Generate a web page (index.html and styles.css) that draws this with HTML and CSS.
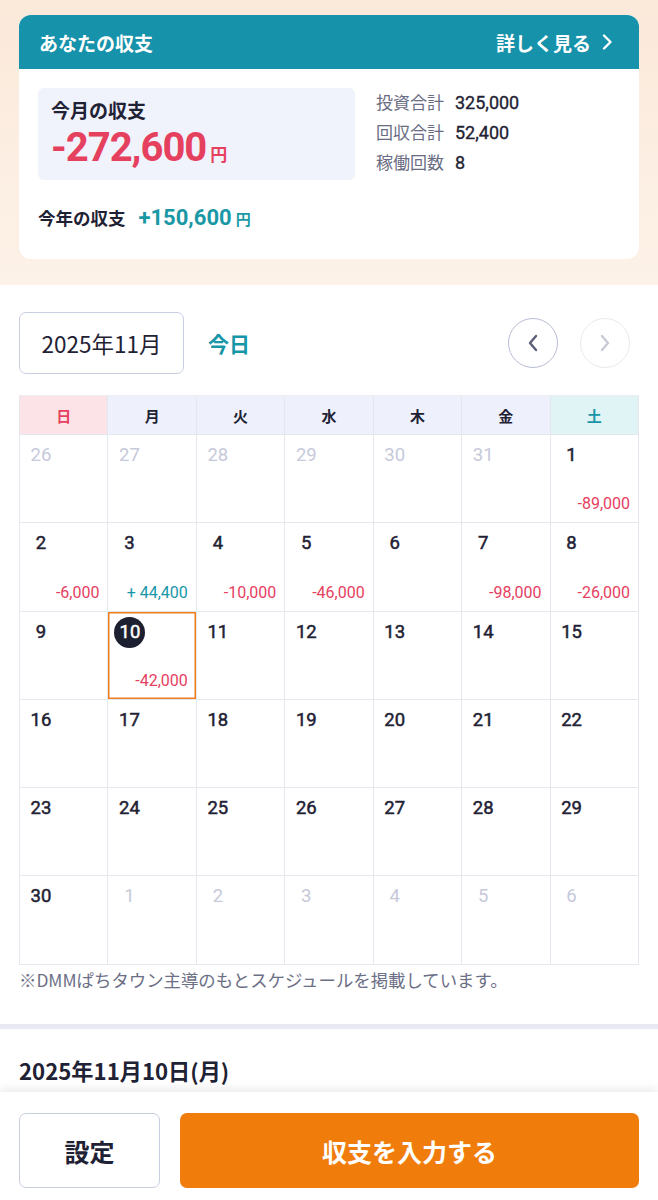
FILE: index.html
```html
<!DOCTYPE html>
<html lang="ja">
<head>
<meta charset="utf-8">
<link rel="stylesheet" href="styles.css">
</head>
<body>
<div class="page">
  <section class="top">
    <div class="card">
      <div class="card-head">
        <span class="card-title">あなたの収支</span>
        <span class="card-link">詳しく見る
          <svg class="link-chev" width="12" height="18" viewBox="0 0 12 18"><path d="M3 2.5 L9.5 9 L3 15.5" fill="none" stroke="#fff" stroke-width="2.4" stroke-linecap="round" stroke-linejoin="round"/></svg>
        </span>
      </div>
      <div class="card-body">
        <div class="summary-row">
          <div class="month-box">
            <div class="month-label">今月の収支</div>
            <div class="month-amount"><span class="big-num">-272,600</span><span class="yen">円</span></div>
          </div>
          <dl class="stats">
            <div class="stat"><dt>投資合計</dt><dd>325,000</dd></div>
            <div class="stat"><dt>回収合計</dt><dd>52,400</dd></div>
            <div class="stat"><dt>稼働回数</dt><dd>8</dd></div>
          </dl>
        </div>
        <div class="year-row">
          <span class="year-label">今年の収支</span>
          <span class="year-num">+150,600</span><span class="year-yen">円</span>
        </div>
      </div>
    </div>
  </section>

  <section class="calendar-section">
    <div class="cal-toolbar">
      <div class="month-select">2025年11月</div>
      <span class="today">今日</span>
      <div class="nav">
        <button class="nav-btn prev"><svg width="14" height="20" viewBox="0 0 14 20"><path d="M10 3 L4 10 L10 17" fill="none" stroke="#5b5e79" stroke-width="2.4" stroke-linecap="round" stroke-linejoin="round"/></svg></button>
        <button class="nav-btn next"><svg width="14" height="20" viewBox="0 0 14 20"><path d="M4 3 L10 10 L4 17" fill="none" stroke="#c9cbd6" stroke-width="2.4" stroke-linecap="round" stroke-linejoin="round"/></svg></button>
      </div>
    </div>

    <div class="cal">
      <div class="wd sun">日</div>
      <div class="wd">月</div>
      <div class="wd">火</div>
      <div class="wd">水</div>
      <div class="wd">木</div>
      <div class="wd">金</div>
      <div class="wd sat">土</div>

      <div class="day other"><span class="dn">26</span></div>
      <div class="day other"><span class="dn">27</span></div>
      <div class="day other"><span class="dn">28</span></div>
      <div class="day other"><span class="dn">29</span></div>
      <div class="day other"><span class="dn">30</span></div>
      <div class="day other"><span class="dn">31</span></div>
      <div class="day"><span class="dn">1</span><span class="amt minus">-89,000</span></div>

      <div class="day"><span class="dn">2</span><span class="amt minus">-6,000</span></div>
      <div class="day"><span class="dn">3</span><span class="amt plus">+ 44,400</span></div>
      <div class="day"><span class="dn">4</span><span class="amt minus">-10,000</span></div>
      <div class="day"><span class="dn">5</span><span class="amt minus">-46,000</span></div>
      <div class="day"><span class="dn">6</span></div>
      <div class="day"><span class="dn">7</span><span class="amt minus">-98,000</span></div>
      <div class="day"><span class="dn">8</span><span class="amt minus">-26,000</span></div>

      <div class="day"><span class="dn">9</span></div>
      <div class="day selected"><span class="dn">10</span><span class="amt minus">-42,000</span></div>
      <div class="day"><span class="dn">11</span></div>
      <div class="day"><span class="dn">12</span></div>
      <div class="day"><span class="dn">13</span></div>
      <div class="day"><span class="dn">14</span></div>
      <div class="day"><span class="dn">15</span></div>

      <div class="day"><span class="dn">16</span></div>
      <div class="day"><span class="dn">17</span></div>
      <div class="day"><span class="dn">18</span></div>
      <div class="day"><span class="dn">19</span></div>
      <div class="day"><span class="dn">20</span></div>
      <div class="day"><span class="dn">21</span></div>
      <div class="day"><span class="dn">22</span></div>

      <div class="day"><span class="dn">23</span></div>
      <div class="day"><span class="dn">24</span></div>
      <div class="day"><span class="dn">25</span></div>
      <div class="day"><span class="dn">26</span></div>
      <div class="day"><span class="dn">27</span></div>
      <div class="day"><span class="dn">28</span></div>
      <div class="day"><span class="dn">29</span></div>

      <div class="day"><span class="dn">30</span></div>
      <div class="day other"><span class="dn">1</span></div>
      <div class="day other"><span class="dn">2</span></div>
      <div class="day other"><span class="dn">3</span></div>
      <div class="day other"><span class="dn">4</span></div>
      <div class="day other"><span class="dn">5</span></div>
      <div class="day other"><span class="dn">6</span></div>
    </div>
    <p class="note">※DMMぱちタウン主導のもとスケジュールを掲載しています。</p>
  </section>

  <div class="divider"></div>

  <section class="detail">
    <h2 class="detail-date">2025年11月10日(月)</h2>
  </section>
</div>

<footer class="bottom-bar">
  <button class="btn-setting">設定</button>
  <button class="btn-input">収支を入力する</button>
</footer>
</body>
</html>
```

FILE: styles.css
```css
* { box-sizing: border-box; }
html, body { margin: 0; padding: 0; }
body {
  width: 658px;
  background: #fff;
  font-family: "Noto Sans CJK JP", "Noto Sans", sans-serif;
  color: #1f2234;
}
.page { width: 658px; }

.top {
  background: linear-gradient(180deg, #fbe9da 0%, #fdf2e8 100%);
  padding: 15px 19px 26px 19px;
}
.card {
  background: #fff;
  border-radius: 12px;
  overflow: hidden;
}
.card-head {
  height: 54px;
  background: #1692aa;
  color: #fff;
  display: flex;
  align-items: center;
  justify-content: space-between;
  padding: 0 26px 0 20px;
}
.card-title { font-size: 19px; font-weight: 700; }
.card-link {
  font-size: 19px; font-weight: 700;
  display: flex; align-items: center; gap: 10px;
}
.link-chev { display: block; }

.card-body { padding: 19px 19px 26px 19px; }
.summary-row { display: flex; align-items: flex-start; gap: 21px; }
.month-box {
  width: 317px;
  background: #f0f2fc;
  border-radius: 6px;
  padding: 10px 13px 10px 13px;
}
.month-label { font-size: 19px; font-weight: 700; line-height: 24px; }
.month-amount { display: flex; align-items: baseline; height: 48px; line-height: 52px; }
.big-num {
  font-family: Roboto, "Noto Sans CJK JP", sans-serif;
  font-size: 40px; font-weight: 700; color: #e6405f; letter-spacing: -1px;
}
.yen { font-size: 17px; font-weight: 700; color: #e6405f; margin-left: 4px; }

.stats { margin: -1px 0 0 0; padding: 0; }
.stat { display: flex; align-items: baseline; height: 30px; line-height: 30px; }
.stat dt { font-size: 17px; color: #696c83; margin: 0; width: 79px; }
.stat dd {
  margin: 0; font-family: Roboto, "Noto Sans CJK JP", sans-serif;
  font-size: 18px; font-weight: 400; color: #1f2234;
  -webkit-text-stroke: 0.35px #1f2234;
}

.year-row {
  display: flex; align-items: baseline;
  margin-top: 23px; height: 30px; line-height: 30px;
}
.year-label { font-size: 17.5px; font-weight: 700; margin-right: 13px; }
.year-num {
  font-family: Roboto, "Noto Sans CJK JP", sans-serif;
  font-size: 22px; font-weight: 700; color: #1a98a6;
}
.year-yen { font-size: 15px; font-weight: 700; color: #1a98a6; margin-left: 4px; }

.calendar-section { padding: 27px 19px 0 19px; }
.cal-toolbar { display: flex; align-items: center; height: 62px; }
.month-select {
  width: 165px; height: 62px;
  border: 1.5px solid #c9cde0; border-radius: 7px;
  display: flex; align-items: center; justify-content: center;
  font-size: 22.5px; color: #1f2234;
}
.today { margin-left: 24px; font-size: 21px; font-weight: 700; color: #1896a9; }
.nav { margin-left: auto; margin-right: 9px; display: flex; gap: 22px; }
.nav-btn {
  width: 50px; height: 50px; border-radius: 50%;
  background: #fff; padding: 0;
  display: flex; align-items: center; justify-content: center;
}
.nav-btn.prev { border: 1.5px solid #b8bcd3; }
.nav-btn.next { border: 1.5px solid #e9eaf0; }

.cal {
  margin-top: 21px;
  display: grid;
  grid-template-columns: repeat(7, 1fr);
  grid-template-rows: 39px repeat(6, 88.3px);
  border-left: 1px solid #e5e7ef;
  border-top: 1px solid #eceef5;
}
.wd {
  background: #eef1fc;
  border-right: 1px solid #e5e7ef;
  border-bottom: 1px solid #e5e7ef;
  display: flex; align-items: center; justify-content: center;
  font-size: 15px; font-weight: 700; color: #1f2234;
}
.wd.sun { background: #fce3e8; color: #e6405f; }
.wd.sat { background: #e1f4f5; color: #1896a9; }

.day {
  border-right: 1px solid #e5e7ef;
  border-bottom: 1px solid #e5e7ef;
  padding: 5px 8px 8px 6px;
  display: flex; flex-direction: column; justify-content: space-between;
}
.dn {
  width: 30px; height: 30px; line-height: 30px; text-align: center;
  font-family: Roboto, "Noto Sans CJK JP", sans-serif;
  font-size: 18.5px; font-weight: 400; color: #1f2234;
  border-radius: 50%;
  -webkit-text-stroke: 0.5px #1f2234;
}
.day.other .dn { color: #c6c9da; -webkit-text-stroke: 0; }
.amt {
  align-self: flex-end;
  font-family: Roboto, "Noto Sans CJK JP", sans-serif;
  font-size: 16px; line-height: 20px;
}
.amt.minus { color: #e6405f; }
.amt.plus { color: #1896a9; }
.day.selected { box-shadow: inset 0 0 0 1.5px #ef7d1a; }
.day.selected .dn { background: #1d2031; color: #fff; width: 31px; height: 31px; line-height: 31px; -webkit-text-stroke: 0.5px #fff; }

.note {
  margin: 3px 0 0 0;
  font-size: 17.4px; line-height: 24px; color: #6c6f86;
}

.divider { height: 5px; background: #e8e9f3; margin-top: 32px; }

.detail { padding: 26px 19px 0 19px; height: 120px; }
.detail-date { margin: 0; font-size: 22.2px; line-height: 30px; font-weight: 700; color: #1f2234; }

.bottom-bar {
  position: fixed; left: 0; bottom: 0;
  width: 658px; height: 108px;
  background: #fff;
  box-shadow: 0 -4px 8px rgba(0,0,0,0.07);
  display: flex; gap: 20px;
  padding: 21px 19px 12px 19px;
}
.btn-setting {
  width: 141px; height: 75px;
  background: #fff;
  border: 1.5px solid #c9cde0; border-radius: 7px;
  font-family: "Noto Sans CJK JP", sans-serif;
  font-size: 25px; font-weight: 700; color: #1f2234;
}
.btn-input {
  flex: 1; height: 75px;
  background: #f07c0b; border: none; border-radius: 7px;
  font-family: "Noto Sans CJK JP", sans-serif;
  font-size: 25px; font-weight: 700; color: #fff;
}
```
